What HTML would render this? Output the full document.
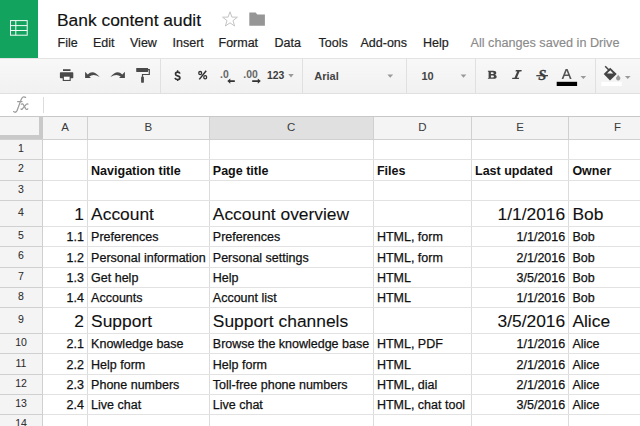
<!DOCTYPE html>
<html><head><meta charset="utf-8">
<style>
*{margin:0;padding:0;box-sizing:border-box}
html,body{width:640px;height:426px;overflow:hidden;background:#fff;font-family:"Liberation Sans",sans-serif;position:relative}
.a{position:absolute;white-space:nowrap}
#logo{left:0;top:0;width:38px;height:58px;background:#12a45f}
#title{left:57px;top:8.5px;font-size:17.4px;color:#111;line-height:22px;-webkit-text-stroke:0.15px #111}
.menu{top:35.5px;font-size:12.5px;color:#222;line-height:15px;-webkit-text-stroke:0.2px #222}
#saved{font-size:12.65px;top:36px;color:#8a8a8a;-webkit-text-stroke:0.15px #8a8a8a}
#tb{left:0;top:58px;width:640px;height:36px;background:linear-gradient(#f8f8f8,#f1f1f1);border-top:1px solid #e3e3e3;border-bottom:1px solid #e0e0e0}
.sep{top:59px;width:1px;height:34px;background:#e0e0e0}
#fbar{left:0;top:94px;width:640px;height:22px;background:#fff}
.fx{left:13.5px;top:93.5px;font-family:"Liberation Serif",serif;font-style:italic;font-size:18.5px;line-height:21px;color:#a0a0a0}
.hdr{top:116px;height:23px;background:#f4f4f4}
.hl{background:#d0d0d0}
.gl{background:#e2e2e2}
.ch{font-size:11.5px;color:#3a3a3a;top:120px;line-height:14px;text-align:center}
.rn{font-size:10.5px;color:#2a2a2a;-webkit-text-stroke:0.05px #2a2a2a;text-align:center;left:0;width:42px;line-height:14px}
.c{font-size:12.5px;color:#111;line-height:15px;-webkit-text-stroke:0.25px #111}
.b{font-weight:bold;-webkit-text-stroke:0}
.big{font-size:17.4px;line-height:20px;-webkit-text-stroke:0.1px #111}
.r{text-align:right}
</style></head><body>
<div class="a" id="logo">
<svg width="38" height="58" style="position:absolute;left:0;top:0">
<g fill="none" stroke="#fff" stroke-width="1" opacity="0.95">
<rect x="10.5" y="20.6" width="16.7" height="14.6"/>
<line x1="10.5" y1="25.6" x2="27.2" y2="25.6"/>
<line x1="10.5" y1="30.5" x2="27.2" y2="30.5"/>
<line x1="15.8" y1="20.6" x2="15.8" y2="35.2"/>
</g></svg>
</div>
<div class="a" id="title">Bank content audit</div>
<svg class="a" style="left:221px;top:10px" width="18" height="18" viewBox="0 0 18 18"><path d="M9 1.8 L10.9 7.1 L16.4 7.2 L12 10.6 L13.6 16 L9 12.8 L4.4 16 L6 10.6 L1.6 7.2 L7.1 7.1 Z" fill="none" stroke="#c4c4c4" stroke-width="1"/></svg>
<svg class="a" style="left:249px;top:12px" width="17" height="15" viewBox="0 0 17 15"><path d="M0.3 0.4 H6.6 L8.3 2.4 H15.9 V13.8 H0.3 Z" fill="#969696"/></svg>

<div class="a menu" style="left:57.5px">File</div>
<div class="a menu" style="left:93px">Edit</div>
<div class="a menu" style="left:130px">View</div>
<div class="a menu" style="left:172.5px">Insert</div>
<div class="a menu" style="left:218.5px">Format</div>
<div class="a menu" style="left:274.5px">Data</div>
<div class="a menu" style="left:318.5px">Tools</div>
<div class="a menu" style="left:360.5px">Add-ons</div>
<div class="a menu" style="left:423px">Help</div>
<div class="a menu" id="saved" style="left:470.5px">All changes saved in Drive</div>

<div class="a" id="tb"></div>
<div class="a sep" style="left:159.6px"></div>
<div class="a sep" style="left:301.6px"></div>
<div class="a sep" style="left:406.1px"></div>
<div class="a sep" style="left:474.7px"></div>
<div class="a sep" style="left:594.8px"></div>

<!-- toolbar icons -->
<svg class="a" style="left:0;top:58px" width="640" height="36" viewBox="0 58 640 36">
<g fill="#4a4a4a">
<!-- printer -->
<rect x="63" y="69.2" width="7.5" height="1.8"/>
<rect x="59.9" y="72.3" width="13.4" height="5.9" rx="0.7"/>
<rect x="62.7" y="75.6" width="8" height="5.4"/>
<rect x="63.9" y="76.7" width="5.7" height="3.2" fill="#fff"/>
<!-- undo -->
</g>
<g fill="#4a4a4a">
<path d="M85.1 71.8 L87.7 74.4 Q93.2 69.2 99.7 77 Q93.4 73.3 89.3 76.6 L91 78.1 H85.1 Z"/>
<path d="M124.9 71.8 L122.3 74.4 Q116.8 69.2 110.3 77 Q116.6 73.3 120.7 76.6 L119 78.1 H124.9 Z"/>
</g>
<g fill="#4a4a4a">
<!-- paint format -->
<rect x="136.2" y="67.9" width="11.9" height="4.1" rx="0.4"/>
<path d="M148 69.7 H149.3 V74.5 H142.5 V76.5" fill="none" stroke="#4a4a4a" stroke-width="1.2"/>
<path d="M141.1 82.4 V77.3 L142.5 75.7 L143.9 77.3 V82.4 Q142.5 83 141.1 82.4 Z"/>
</g>
<g font-family="Liberation Sans" font-weight="bold" fill="#333">
<text x="267" y="78.8" font-size="10.4" fill="#3c3c3c">123</text>
<text x="314.3" y="79.6" font-size="11" fill="#444">Arial</text>
<text x="421.5" y="79.6" font-size="11" fill="#444">10</text>
</g>
<g font-family="Liberation Sans" font-weight="bold" fill="#666">
<text x="220" y="78.3" font-size="10.4">.0</text>
<text x="243.3" y="78.3" font-size="10.4">.00</text>
</g>
<g fill="#333">
<path d="M227.3 81.1 L230.3 78.5 V80.3 H234.8 V81.9 H230.3 V83.7 Z"/>
<path d="M260.8 81.1 L257.8 78.5 V80.3 H252.2 V81.9 H257.8 V83.7 Z"/>
</g>
<g fill="#999">
<path d="M288.3 74.1 H293.7 L291 77.4 Z"/>
<path d="M387.4 74.5 H393.1 L390.25 77.8 Z"/>
<path d="M460.6 74.5 H466.3 L463.45 77.8 Z"/>
<path d="M580.5 75.9 H586.1 L583.3 79 Z"/>
<path d="M624.9 75.9 H630.6 L627.75 79 Z"/>
</g>
<g font-family="Liberation Serif" fill="#3a3a3a">

<text x="538.2" y="80" font-size="14.5" font-weight="bold" font-style="italic" stroke="#3a3a3a" stroke-width="0.3">S</text>
</g>
<path fill-rule="evenodd" fill="#444" d="M487.9 70.8 H493.2 Q496.3 70.8 496.3 72.9 Q496.3 74.3 494.9 74.7 Q496.7 75.2 496.7 76.8 Q496.7 78.8 493.6 78.8 H487.9 V77.9 H488.6 V71.7 H487.9 Z M490.9 72.2 V74.1 H492.5 Q493.7 74.1 493.7 73.15 Q493.7 72.2 492.5 72.2 Z M490.9 75.4 V77.4 H492.8 Q494 77.4 494 76.4 Q494 75.4 492.8 75.4 Z"/>
<path d="M515.9 70.1 H521.8 L521.4 71.4 H519.6 L516.9 77.7 H519.2 L518.8 79 H512 L512.4 77.7 H514.5 L517.2 71.4 H515.5 Z" fill="#444"/>
<rect x="536.3" y="75" width="11.7" height="1.3" fill="#444"/>
<path fill-rule="evenodd" fill="#555" d="M561.6 78.9 L565.6 69 H567.6 L571.6 78.9 H569.8 L568.7 76.1 H564.5 L563.4 78.9 Z M565.1 74.6 H568.1 L566.6 70.7 Z"/>
<rect x="556.7" y="81.8" width="20.4" height="4.2" fill="#000"/>
<g fill="none" stroke="#333" stroke-width="1.7">
<path d="M179.9 73.6 Q179.6 72.1 177.6 72.1 Q175.5 72.1 175.5 73.9 Q175.5 75.3 177.6 75.8 Q179.9 76.3 179.9 77.9 Q179.9 79.5 177.6 79.5 Q175.3 79.5 175 77.9"/>
<path d="M177.6 70.3 V72.2 M177.6 79.4 V80.9" stroke-width="1.4"/>
</g>
<g fill="none" stroke="#333" stroke-width="1.3">
<ellipse cx="200.2" cy="73.1" rx="1.45" ry="1.6"/>
<ellipse cx="205.2" cy="77.2" rx="1.45" ry="1.6"/>
<path d="M199.3 79.4 L206.2 70.8" stroke-width="1.5"/>
</g>
<!-- bucket -->
<path d="M603.7 74.1 L610.2 67.7 L616.7 73.9 L610 80.4 Z" fill="#444"/>
<path d="M607.1 73.4 L610.2 70.3 L613.3 73.4 Z" fill="#f5f5f5"/>
<path d="M605.2 66.2 L609.6 70.8" stroke="#444" stroke-width="1.5"/>
<path d="M618.2 74.8 L620.2 77.6 A2.15 2.15 0 1 1 616.2 77.6 Z" fill="#9a9a9a"/>
<rect x="601.3" y="81.8" width="20.4" height="4.2" fill="#fff"/>
</svg>

<!-- formula bar -->
<svg class="a" style="left:0;top:92px" width="42" height="24" viewBox="0 92 42 24"><g fill="none" stroke="#9c9c9c" stroke-width="1.25" stroke-linecap="round">
<path d="M13.6 111.6 Q15.8 113.4 17.2 110.2 L21.2 99.4 Q22.8 95.6 25.6 97.4"/>
<path d="M17.6 101.6 H22"/>
<path d="M21.3 104.2 Q22.6 103.2 23.6 105 L25.6 108.6 Q26.6 110.2 27.8 108.8"/>
<path d="M27.9 104 Q27.2 103.4 26.2 104.4 L22.6 108.6 Q21.8 109.8 21 109"/>
</g></svg>
<div class="a" style="left:42.5px;top:97px;width:1.2px;height:16px;background:#dcdcdc"></div>

<!-- header row -->
<div class="a" style="left:0;top:116px;width:640px;height:1px;background:#c8c8c8"></div>
<div class="a hdr" style="left:0;width:640px;top:117px;height:22px"></div>
<div class="a hdr" style="left:209.5px;width:163.5px;top:117px;height:22px;background:#e0e0e0"></div>
<!-- row header column -->
<div class="a" style="left:0;top:139px;width:42px;height:287px;background:#f4f4f4"></div>
<!-- corner thick bars -->
<div class="a" style="left:39px;top:117px;width:4px;height:22px;background:#c9c9c9"></div>
<div class="a" style="left:0;top:135px;width:43px;height:4px;background:#c9c9c9"></div>

<div class="a" style="left:87.00px;top:139px;width:1px;height:300px;background:#dcdcdc"></div>
<div class="a" style="left:87.00px;top:117px;width:1px;height:22px;background:#d0d0d0"></div>
<div class="a" style="left:208.70px;top:139px;width:1px;height:300px;background:#dcdcdc"></div>
<div class="a" style="left:208.70px;top:117px;width:1px;height:22px;background:#d0d0d0"></div>
<div class="a" style="left:372.80px;top:139px;width:1px;height:300px;background:#dcdcdc"></div>
<div class="a" style="left:372.80px;top:117px;width:1px;height:22px;background:#d0d0d0"></div>
<div class="a" style="left:470.90px;top:139px;width:1px;height:300px;background:#dcdcdc"></div>
<div class="a" style="left:470.90px;top:117px;width:1px;height:22px;background:#d0d0d0"></div>
<div class="a" style="left:568.30px;top:139px;width:1px;height:300px;background:#dcdcdc"></div>
<div class="a" style="left:568.30px;top:117px;width:1px;height:22px;background:#d0d0d0"></div>
<div class="a" style="left:43px;top:138.70px;width:600px;height:1px;background:#e2e2e2"></div>
<div class="a" style="left:0px;top:138.70px;width:42px;height:1px;background:#d0d0d0"></div>
<div class="a" style="left:43px;top:159.10px;width:600px;height:1px;background:#e2e2e2"></div>
<div class="a" style="left:0px;top:159.10px;width:42px;height:1px;background:#d0d0d0"></div>
<div class="a" style="left:43px;top:179.50px;width:600px;height:1px;background:#e2e2e2"></div>
<div class="a" style="left:0px;top:179.50px;width:42px;height:1px;background:#d0d0d0"></div>
<div class="a" style="left:43px;top:199.80px;width:600px;height:1px;background:#e2e2e2"></div>
<div class="a" style="left:0px;top:199.80px;width:42px;height:1px;background:#d0d0d0"></div>
<div class="a" style="left:43px;top:225.70px;width:600px;height:1px;background:#e2e2e2"></div>
<div class="a" style="left:0px;top:225.70px;width:42px;height:1px;background:#d0d0d0"></div>
<div class="a" style="left:43px;top:246.10px;width:600px;height:1px;background:#e2e2e2"></div>
<div class="a" style="left:0px;top:246.10px;width:42px;height:1px;background:#d0d0d0"></div>
<div class="a" style="left:43px;top:266.50px;width:600px;height:1px;background:#e2e2e2"></div>
<div class="a" style="left:0px;top:266.50px;width:42px;height:1px;background:#d0d0d0"></div>
<div class="a" style="left:43px;top:286.60px;width:600px;height:1px;background:#e2e2e2"></div>
<div class="a" style="left:0px;top:286.60px;width:42px;height:1px;background:#d0d0d0"></div>
<div class="a" style="left:43px;top:306.80px;width:600px;height:1px;background:#e2e2e2"></div>
<div class="a" style="left:0px;top:306.80px;width:42px;height:1px;background:#d0d0d0"></div>
<div class="a" style="left:43px;top:333.00px;width:600px;height:1px;background:#e2e2e2"></div>
<div class="a" style="left:0px;top:333.00px;width:42px;height:1px;background:#d0d0d0"></div>
<div class="a" style="left:43px;top:353.40px;width:600px;height:1px;background:#e2e2e2"></div>
<div class="a" style="left:0px;top:353.40px;width:42px;height:1px;background:#d0d0d0"></div>
<div class="a" style="left:43px;top:373.70px;width:600px;height:1px;background:#e2e2e2"></div>
<div class="a" style="left:0px;top:373.70px;width:42px;height:1px;background:#d0d0d0"></div>
<div class="a" style="left:43px;top:393.90px;width:600px;height:1px;background:#e2e2e2"></div>
<div class="a" style="left:0px;top:393.90px;width:42px;height:1px;background:#d0d0d0"></div>
<div class="a" style="left:43px;top:413.80px;width:600px;height:1px;background:#e2e2e2"></div>
<div class="a" style="left:0px;top:413.80px;width:42px;height:1px;background:#d0d0d0"></div>
<div class="a" style="left:43px;top:434.00px;width:600px;height:1px;background:#e2e2e2"></div>
<div class="a" style="left:0px;top:434.00px;width:42px;height:1px;background:#d0d0d0"></div>
<div class="a" style="left:43px;top:138.7px;width:600px;height:1px;background:#d0d0d0"></div>
<div class="a" style="left:42px;top:139px;width:1px;height:300px;background:#d0d0d0"></div>
<div class="a ch" style="left:42.50px;width:45.00px">A</div>
<div class="a ch" style="left:87.50px;width:121.70px">B</div>
<div class="a ch" style="left:209.20px;width:164.10px">C</div>
<div class="a ch" style="left:373.30px;width:98.10px">D</div>
<div class="a ch" style="left:471.40px;width:97.40px">E</div>
<div class="a ch" style="left:568.80px;width:97.40px">F</div>
<div class="a rn" style="top:141.00px">1</div>
<div class="a rn" style="top:161.40px">2</div>
<div class="a rn" style="top:181.75px">3</div>
<div class="a rn" style="top:204.85px">4</div>
<div class="a rn" style="top:228.00px">5</div>
<div class="a rn" style="top:248.40px">6</div>
<div class="a rn" style="top:268.65px">7</div>
<div class="a rn" style="top:288.80px">8</div>
<div class="a rn" style="top:312.00px">9</div>
<div class="a rn" style="top:335.30px">10</div>
<div class="a rn" style="top:355.65px">11</div>
<div class="a rn" style="top:375.90px">12</div>
<div class="a rn" style="top:395.95px">13</div>
<div class="a rn" style="top:416.00px">14</div>
<div class="a c b" style="left:91.10px;top:163.50px">Navigation title</div>
<div class="a c b" style="left:212.80px;top:163.50px">Page title</div>
<div class="a c b" style="left:376.90px;top:163.50px">Files</div>
<div class="a c b" style="left:475.00px;top:163.50px">Last updated</div>
<div class="a c b" style="left:572.40px;top:163.50px">Owner</div>
<div class="a c big r" style="right:556.10px;top:203.60px">1</div>
<div class="a c big" style="left:91.10px;top:203.60px">Account</div>
<div class="a c big" style="left:212.80px;top:203.60px">Account overview</div>
<div class="a c big r" style="right:74.80px;top:203.60px">1/1/2016</div>
<div class="a c big" style="left:572.40px;top:203.60px">Bob</div>
<div class="a c r" style="right:556.10px;top:230.10px">1.1</div>
<div class="a c " style="left:91.10px;top:230.10px">Preferences</div>
<div class="a c " style="left:212.80px;top:230.10px">Preferences</div>
<div class="a c " style="left:376.90px;top:230.10px">HTML, form</div>
<div class="a c r" style="right:74.80px;top:230.10px">1/1/2016</div>
<div class="a c " style="left:572.40px;top:230.10px">Bob</div>
<div class="a c r" style="right:556.10px;top:250.50px">1.2</div>
<div class="a c " style="left:91.10px;top:250.50px">Personal information</div>
<div class="a c " style="left:212.80px;top:250.50px">Personal settings</div>
<div class="a c " style="left:376.90px;top:250.50px">HTML, form</div>
<div class="a c r" style="right:74.80px;top:250.50px">2/1/2016</div>
<div class="a c " style="left:572.40px;top:250.50px">Bob</div>
<div class="a c r" style="right:556.10px;top:270.60px">1.3</div>
<div class="a c " style="left:91.10px;top:270.60px">Get help</div>
<div class="a c " style="left:212.80px;top:270.60px">Help</div>
<div class="a c " style="left:376.90px;top:270.60px">HTML</div>
<div class="a c r" style="right:74.80px;top:270.60px">3/5/2016</div>
<div class="a c " style="left:572.40px;top:270.60px">Bob</div>
<div class="a c r" style="right:556.10px;top:290.80px">1.4</div>
<div class="a c " style="left:91.10px;top:290.80px">Accounts</div>
<div class="a c " style="left:212.80px;top:290.80px">Account list</div>
<div class="a c " style="left:376.90px;top:290.80px">HTML</div>
<div class="a c r" style="right:74.80px;top:290.80px">1/1/2016</div>
<div class="a c " style="left:572.40px;top:290.80px">Bob</div>
<div class="a c big r" style="right:556.10px;top:310.90px">2</div>
<div class="a c big" style="left:91.10px;top:310.90px">Support</div>
<div class="a c big" style="left:212.80px;top:310.90px">Support channels</div>
<div class="a c big r" style="right:74.80px;top:310.90px">3/5/2016</div>
<div class="a c big" style="left:572.40px;top:310.90px">Alice</div>
<div class="a c r" style="right:556.10px;top:337.40px">2.1</div>
<div class="a c " style="left:91.10px;top:337.40px">Knowledge base</div>
<div class="a c " style="left:212.80px;top:337.40px">Browse the knowledge base</div>
<div class="a c " style="left:376.90px;top:337.40px">HTML, PDF</div>
<div class="a c r" style="right:74.80px;top:337.40px">1/1/2016</div>
<div class="a c " style="left:572.40px;top:337.40px">Alice</div>
<div class="a c r" style="right:556.10px;top:357.70px">2.2</div>
<div class="a c " style="left:91.10px;top:357.70px">Help form</div>
<div class="a c " style="left:212.80px;top:357.70px">Help form</div>
<div class="a c " style="left:376.90px;top:357.70px">HTML</div>
<div class="a c r" style="right:74.80px;top:357.70px">2/1/2016</div>
<div class="a c " style="left:572.40px;top:357.70px">Alice</div>
<div class="a c r" style="right:556.10px;top:377.90px">2.3</div>
<div class="a c " style="left:91.10px;top:377.90px">Phone numbers</div>
<div class="a c " style="left:212.80px;top:377.90px">Toll-free phone numbers</div>
<div class="a c " style="left:376.90px;top:377.90px">HTML, dial</div>
<div class="a c r" style="right:74.80px;top:377.90px">2/1/2016</div>
<div class="a c " style="left:572.40px;top:377.90px">Alice</div>
<div class="a c r" style="right:556.10px;top:397.80px">2.4</div>
<div class="a c " style="left:91.10px;top:397.80px">Live chat</div>
<div class="a c " style="left:212.80px;top:397.80px">Live chat</div>
<div class="a c " style="left:376.90px;top:397.80px">HTML, chat tool</div>
<div class="a c r" style="right:74.80px;top:397.80px">3/5/2016</div>
<div class="a c " style="left:572.40px;top:397.80px">Alice</div>
</body></html>
